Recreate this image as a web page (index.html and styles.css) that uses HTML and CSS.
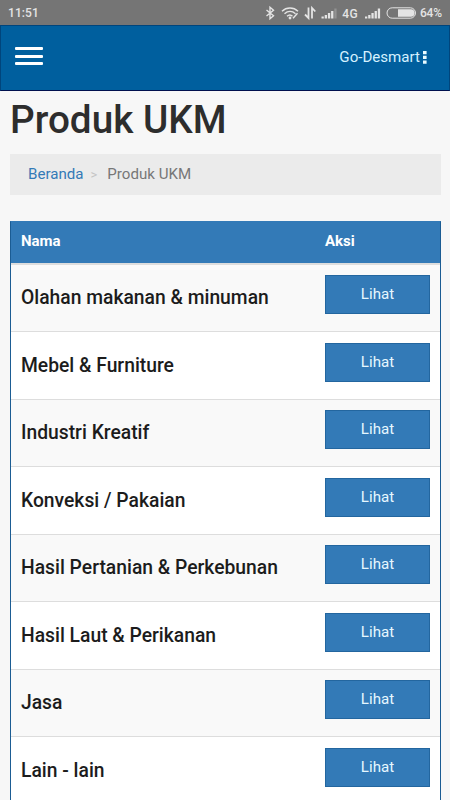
FILE: index.html
```html
<!DOCTYPE html>
<html lang="id">
<head>
	<meta charset="utf-8">
	<meta name="viewport" content="width=device-width, initial-scale=1">
	<title>Produk UKM</title>
	<link rel="stylesheet" href="styles.css">
</head>
<body>
<div class="statusbar">
  <span class="clock">11:51</span>
  <svg class="status-icons" width="152" height="16" viewBox="0 0 152 16">
    <!-- bluetooth -->
    <path class="line" d="M2.500 5l7 5.700L6 13.700V2.300l3.500 3-7 5.700"/>
    <!-- wifi -->
    <path class="line" d="M18 6.200c4.500-4.200 11.500-4.200 16 0M20.500 8.800c3.300-3 7.700-3 11 0M23 11.200c1.900-1.700 3.800-1.700 5.500 0M29 13.300l4.500-5"/>
    <circle class="fill" cx="26" cy="13" r="1.400"/>
    <!-- data arrows -->
    <path class="line bold" d="M44.500 2.500v10.500l-3.500-3.500M48 13.500V3l3.300 3.500"/>
    <!-- sim 1 -->
    <path class="fill" d="M57.500 11.500h2.300V13.500h-2.300zM60.700 10H63v3.500h-2.300zM63.900 8h2.300v5.500h-2.300zM67.100 6h2.300v7.500h-2.300z"/>
    <path class="dim" d="M70.300 3.500h2.300v10h-2.300z"/>
    <text x="78.300" y="12.600" textLength="15.300">4G</text>
    <!-- sim 2 -->
    <path class="fill" d="M101 11.500h2.300v2H101zM104.200 10h2.300v3.500h-2.300zM107.400 8h2.300v5.500h-2.300zM110.600 6h2.300v7.500h-2.300zM113.800 3.500h2.300v10h-2.300z"/>
    <!-- battery -->
    <rect class="outline" x="123" y="2.800" width="28.500" height="10.400" rx="5.200"/>
    <path class="fill" d="M134 4.200h12.800a3.800 3.800 0 0 1 0 7.600H134z"/>
  </svg>
  <span class="percent">64%</span>
</div>

<nav class="navbar">
  <a class="toggle" href="#">
    <span class="icon-bar"></span>
    <span class="icon-bar"></span>
    <span class="icon-bar"></span>
  </a>
  <a class="brand" href="#">Go-Desmart
    <svg class="dots" width="4" height="13" viewBox="0 0 4 13">
      <path d="M0 0h3.600v3.300H0zM0 4.700h3.600V8H0zM0 9.400h3.600v3.300H0z"/>
    </svg>
  </a>
</nav>

<div class="container">
  <h1>Produk UKM</h1>
  <ol class="breadcrumb">
    <li><a href="#">Beranda</a></li>
    <li class="active">Produk UKM</li>
  </ol>

  <table class="table">
    <thead>
      <tr><th class="nama">Nama</th><th>Aksi</th></tr>
    </thead>
    <tbody>
      <tr><td class="nama">Olahan makanan &amp; minuman</td><td><a class="btn" href="#">Lihat</a></td></tr>
      <tr><td class="nama">Mebel &amp; Furniture</td><td><a class="btn" href="#">Lihat</a></td></tr>
      <tr><td class="nama">Industri Kreatif</td><td><a class="btn" href="#">Lihat</a></td></tr>
      <tr><td class="nama">Konveksi / Pakaian</td><td><a class="btn" href="#">Lihat</a></td></tr>
      <tr><td class="nama">Hasil Pertanian &amp; Perkebunan</td><td><a class="btn" href="#">Lihat</a></td></tr>
      <tr><td class="nama">Hasil Laut &amp; Perikanan</td><td><a class="btn" href="#">Lihat</a></td></tr>
      <tr><td class="nama">Jasa</td><td><a class="btn" href="#">Lihat</a></td></tr>
      <tr><td class="nama">Lain - lain</td><td><a class="btn" href="#">Lihat</a></td></tr>
    </tbody>
  </table>
</div>
</body>
</html>
```

FILE: styles.css
```css
* {
  box-sizing: border-box;
}
body {
  height: 800px;
  margin: 0;
  overflow: hidden;
  background-color: #f7f7f7;
  font-family: Roboto, "Liberation Sans", sans-serif;
  font-size: 15.1px;
  color: #1c1c1c;
}
a {
  color: #337ab7;
  text-decoration: none;
}

/* phone status bar */
.statusbar {
  display: flex;
  align-items: center;
  height: 25px;
  padding: 0 8px;
  background-color: #757575;
  color: #e4e4e4;
  font-size: 12px;
  font-weight: 500;
}
.clock {
  letter-spacing: 0.1px;
}
.status-icons {
  margin-left: auto;
}
.status-icons .line {
  fill: none;
  stroke: #e4e4e4;
  stroke-width: 1.4;
}
.status-icons .bold {
  stroke-width: 1.8;
}
.status-icons .fill {
  fill: #e4e4e4;
}
.status-icons .dim {
  fill: #929292;
}
.status-icons .outline {
  fill: none;
  stroke: #e4e4e4;
}
.status-icons text {
  fill: #e4e4e4;
  font-size: 12px;
  font-weight: 500;
}
.percent {
  width: 22px;
  margin-left: 4px;
  font-size: 12px;
  letter-spacing: -0.2px;
}

.navbar {
  display: flex;
  justify-content: space-between;
  align-items: center;
  height: 66px;
  padding: 0 22px 2px 14px;
  background-color: #005f9e;
  border: 1px solid #00457c;
  border-bottom-color: #00104e;
}
.toggle {
  display: flex;
  flex-direction: column;
  gap: 4.5px;
  width: 28px;
  padding-bottom: 2px;
}
.icon-bar {
  height: 3px;
  border-radius: 1px;
  background-color: #fff;
}
.brand {
  display: flex;
  align-items: center;
  gap: 3px;
  color: #d4f1ff;
}
.dots {
  fill: #e9fbff;
}

.container {
  padding: 0 9px 0 10px;
}
h1 {
  margin: 6px 0 11px;
  font-size: 38.7px;
  line-height: 46px;
  font-weight: 500;
  color: #2d2d2d;
}
.breadcrumb {
  display: flex;
  align-items: center;
  height: 41px;
  margin: 0 0 25.5px;
  padding: 0 18px 2px;
  list-style: none;
  background-color: #ebebeb;
}
.breadcrumb .active {
  color: #777;
}
.breadcrumb .active:before {
  content: ">";
  padding: 0 10px 0 7px;
  color: #c4c4c4;
  font-size: 13px;
}

.table {
  display: block;
  border: 1px solid #1b5c93;
  border-top-color: #337ab7;
  background-color: #fff;
}
.table thead,
.table tbody {
  display: block;
}
.table tr {
  display: flex;
  align-items: center;
}
.table th,
.table td {
  padding: 0;
  text-align: left;
}
.table .nama {
  width: 314px;
  padding-left: 10px;
}
.table thead tr {
  height: 43px;
  padding-bottom: 2px;
  background-color: #337ab7;
  border-bottom: 2px solid #ddd;
  color: #fff;
  font-size: 15px;
  font-weight: 700;
}
.table tbody tr {
  height: 67.5px;
  border-bottom: 1px solid #ddd;
}
.table tbody tr:nth-child(odd) {
  background-color: #f9f9f9;
}
.table tbody .nama {
  font-size: 19.3px;
  font-weight: 500;
}
.btn {
  display: block;
  width: 105px;
  height: 39px;
  margin-bottom: 6px;
  border: 1px solid #23669f;
  background-color: #337ab7;
  color: #e6f7ff;
  line-height: 36px;
  text-align: center;
}
```
